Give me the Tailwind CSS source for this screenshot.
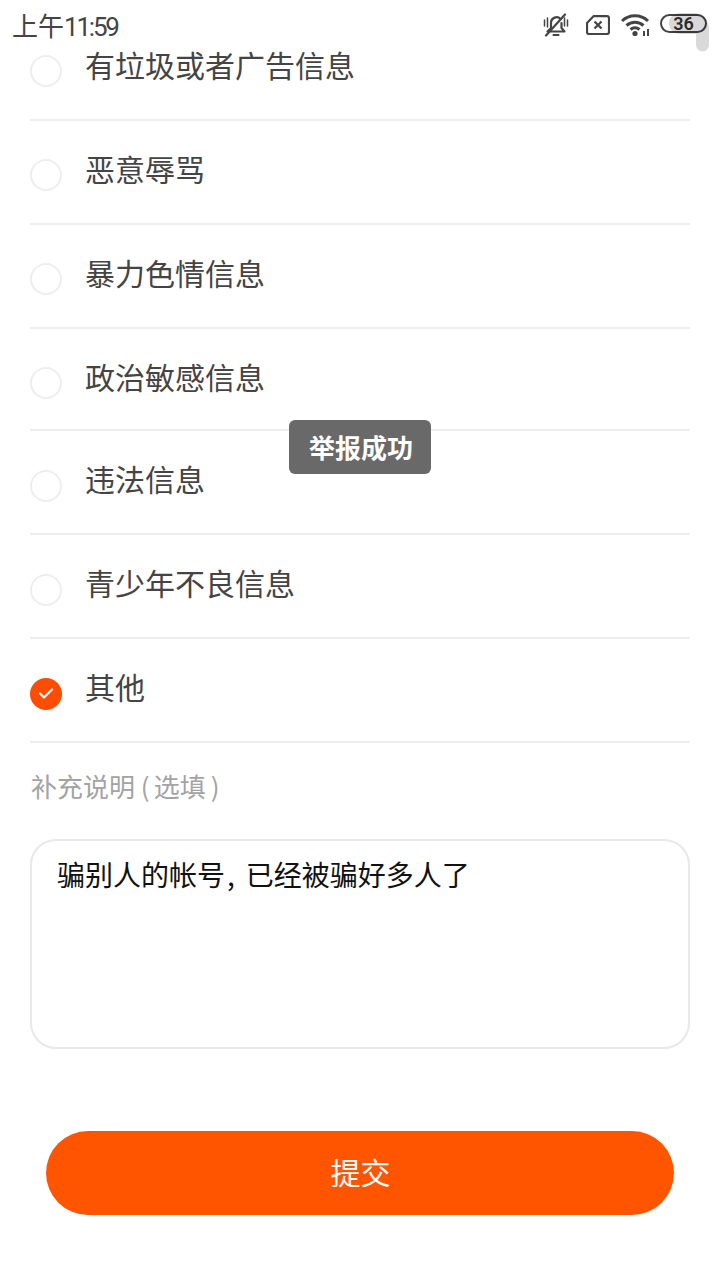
<!DOCTYPE html>
<html lang="zh">
  <head>
    <meta charset="UTF-8" />
    <meta name="viewport" content="width=device-width, initial-scale=1.0" />
    <title>举报</title>
    <script src="https://cdn.jsdelivr.net/npm/@tailwindcss/browser@4"></script>
  </head>
  <body class="bg-white font-['Noto_Sans_CJK_SC','Noto_Sans',sans-serif]">
    <div class="relative w-[720px] h-[1280px] overflow-hidden">
      <!-- Status bar -->
      <div class="h-[48px] flex items-center justify-between pl-[12px] pr-[13px] text-[#444]">
        <span class="text-[26px] leading-none font-['Roboto','Noto_Sans_CJK_SC',sans-serif] mt-[5px]">上午<span class="tracking-[-2.200px]">11:59</span></span>
        <div class="flex items-center mt-[2px] relative">
          <!-- muted bell -->
          <svg class="w-[26px] h-[24px] mr-[17px]" viewBox="0 0 26 24" fill="none" stroke="#444" stroke-width="2.200" stroke-linecap="round" stroke-linejoin="round">
            <path d="M8 15V9.500a5.500 5.500 0 0 1 9.500-3.500M18.500 10v5l3 3.500h-17l3.500-3.500" />
            <path d="M10.500 22h5" />
            <path d="M3 22.500L22 1.500" />
            <path d="M1.500 7v6M4.500 5v9M21.500 5v8M24.500 7v6" stroke-width="1.500" />
          </svg>
          <!-- sim with x -->
          <svg class="w-[24px] h-[20px] mr-[11px]" viewBox="0 0 24 20" fill="none" stroke="#444" stroke-width="2.200">
            <path d="M7.500 1.200H21a2 2 0 0 1 2 2V17a2 2 0 0 1-2 2H3a2 2 0 0 1-2-2V8Z" stroke-linejoin="round" />
            <path d="M8.500 6.500l7 7M15.500 6.500l-7 7" />
          </svg>
          <!-- wifi -->
          <svg class="w-[30px] h-[24px] mr-[9px]" viewBox="0 0 30 24" fill="none" stroke="#444" stroke-width="3">
            <path d="M1 8a19 19 0 0 1 26 0M5.500 12.500a13 13 0 0 1 17 0M9.500 16.500a7 7 0 0 1 9 0" />
            <circle cx="14" cy="20.500" r="2.600" fill="#444" stroke="none" />
            <path d="M23 18v5M27 16v7" stroke-width="2" />
          </svg>
          <!-- battery -->
          <div class="w-[47px] h-[19px] mt-[-3px] rounded-full border-2 border-[#444] flex items-center justify-center">
            <span class="text-[18px] leading-none font-semibold font-['Roboto',sans-serif] text-[#333]">36</span>
          </div>
        </div>
      </div>
      <!-- floating touch pointer -->
      <svg class="absolute left-[669px] top-[12px] w-[41px] h-[41px]" viewBox="0 0 41 41">
        <path d="M12 1H24C34 1 40 8 40 18V33a6.500 6.500 0 0 1-13 0V22H12C4 22 0 17 0 11C0 5 5 1 12 1Z" fill="#000" fill-opacity="0.15" />
      </svg>

      <!-- Report reasons -->
      <div class="mx-[30px]">
        <div class="h-[73px] border-b-2 border-[#eeeeee] flex">
          <span class="w-[32px] h-[32px] mt-[7px] rounded-full border-2 border-[#eeeeee]"></span>
          <span class="ml-[23px] mt-[-4px] text-[30px] leading-[40px] text-[#444]">有垃圾或者广告信息</span>
        </div>
        <div class="h-[104px] border-b-2 border-[#eeeeee] flex items-center">
          <span class="w-[32px] h-[32px] mt-[5px] rounded-full border-2 border-[#eeeeee]"></span>
          <span class="ml-[23px] mt-[-9px] text-[30px] leading-[40px] text-[#444]">恶意辱骂</span>
        </div>
        <div class="h-[104px] border-b-2 border-[#eeeeee] flex items-center">
          <span class="w-[32px] h-[32px] mt-[5px] rounded-full border-2 border-[#eeeeee]"></span>
          <span class="ml-[23px] mt-[-9px] text-[30px] leading-[40px] text-[#444]">暴力色情信息</span>
        </div>
        <div class="h-[102px] border-b-2 border-[#eeeeee] flex items-center">
          <span class="w-[32px] h-[32px] mt-[7px] rounded-full border-2 border-[#eeeeee]"></span>
          <span class="ml-[23px] mt-[-7px] text-[30px] leading-[40px] text-[#444]">政治敏感信息</span>
        </div>
        <div class="h-[104px] border-b-2 border-[#eeeeee] flex items-center">
          <span class="w-[32px] h-[32px] mt-[7px] rounded-full border-2 border-[#eeeeee]"></span>
          <span class="ml-[23px] mt-[-9px] text-[30px] leading-[40px] text-[#444]">违法信息</span>
        </div>
        <div class="h-[104px] border-b-2 border-[#eeeeee] flex items-center">
          <span class="w-[32px] h-[32px] mt-[7px] rounded-full border-2 border-[#eeeeee]"></span>
          <span class="ml-[23px] mt-[-9px] text-[30px] leading-[40px] text-[#444]">青少年不良信息</span>
        </div>
        <div class="h-[104px] border-b-2 border-[#eeeeee] flex items-center">
          <span class="w-[32px] h-[32px] mt-[7px] rounded-full bg-[#fd4c04] flex items-center justify-center">
            <svg class="w-[16px] h-[13px]" viewBox="0 0 16 13" fill="none" stroke="#fff" stroke-width="2.200" stroke-linecap="round" stroke-linejoin="round"><path d="M2 6.500l4 4 8-8" /></svg>
          </span>
          <span class="ml-[23px] mt-[-9px] text-[30px] leading-[40px] text-[#444]">其他</span>
        </div>

        <p class="mt-[25px] text-[26px] leading-[36px] text-[#a3a3a3] pl-[1px]">补充说明 (<span class="ml-[4px] mr-[5px]">选填</span>)</p>

        <!-- Extra description -->
        <div class="mt-[35px] h-[210px] rounded-[26px] border-2 border-[#e8e8e8] pl-[25px] pt-[14px] text-[28px] leading-[38px] text-[#111]">骗别人的帐号<span class="ml-[2px] mr-[11px]">,</span>已经被骗好多人了</div>

        <button class="block mt-[82px] ml-[16px] w-[628px] h-[84px] rounded-full bg-[#ff5500] text-white text-[30px] pl-[1px] pb-[4px]">提交</button>
      </div>

      <!-- Toast -->
      <div class="absolute left-[289px] top-[420px] w-[142px] h-[54px] rounded-[6px] bg-[#666666]/98 flex items-center justify-center text-white text-[26px] font-bold pl-[2px] pb-[2px]">举报成功</div>
    </div>
  </body>
</html>
